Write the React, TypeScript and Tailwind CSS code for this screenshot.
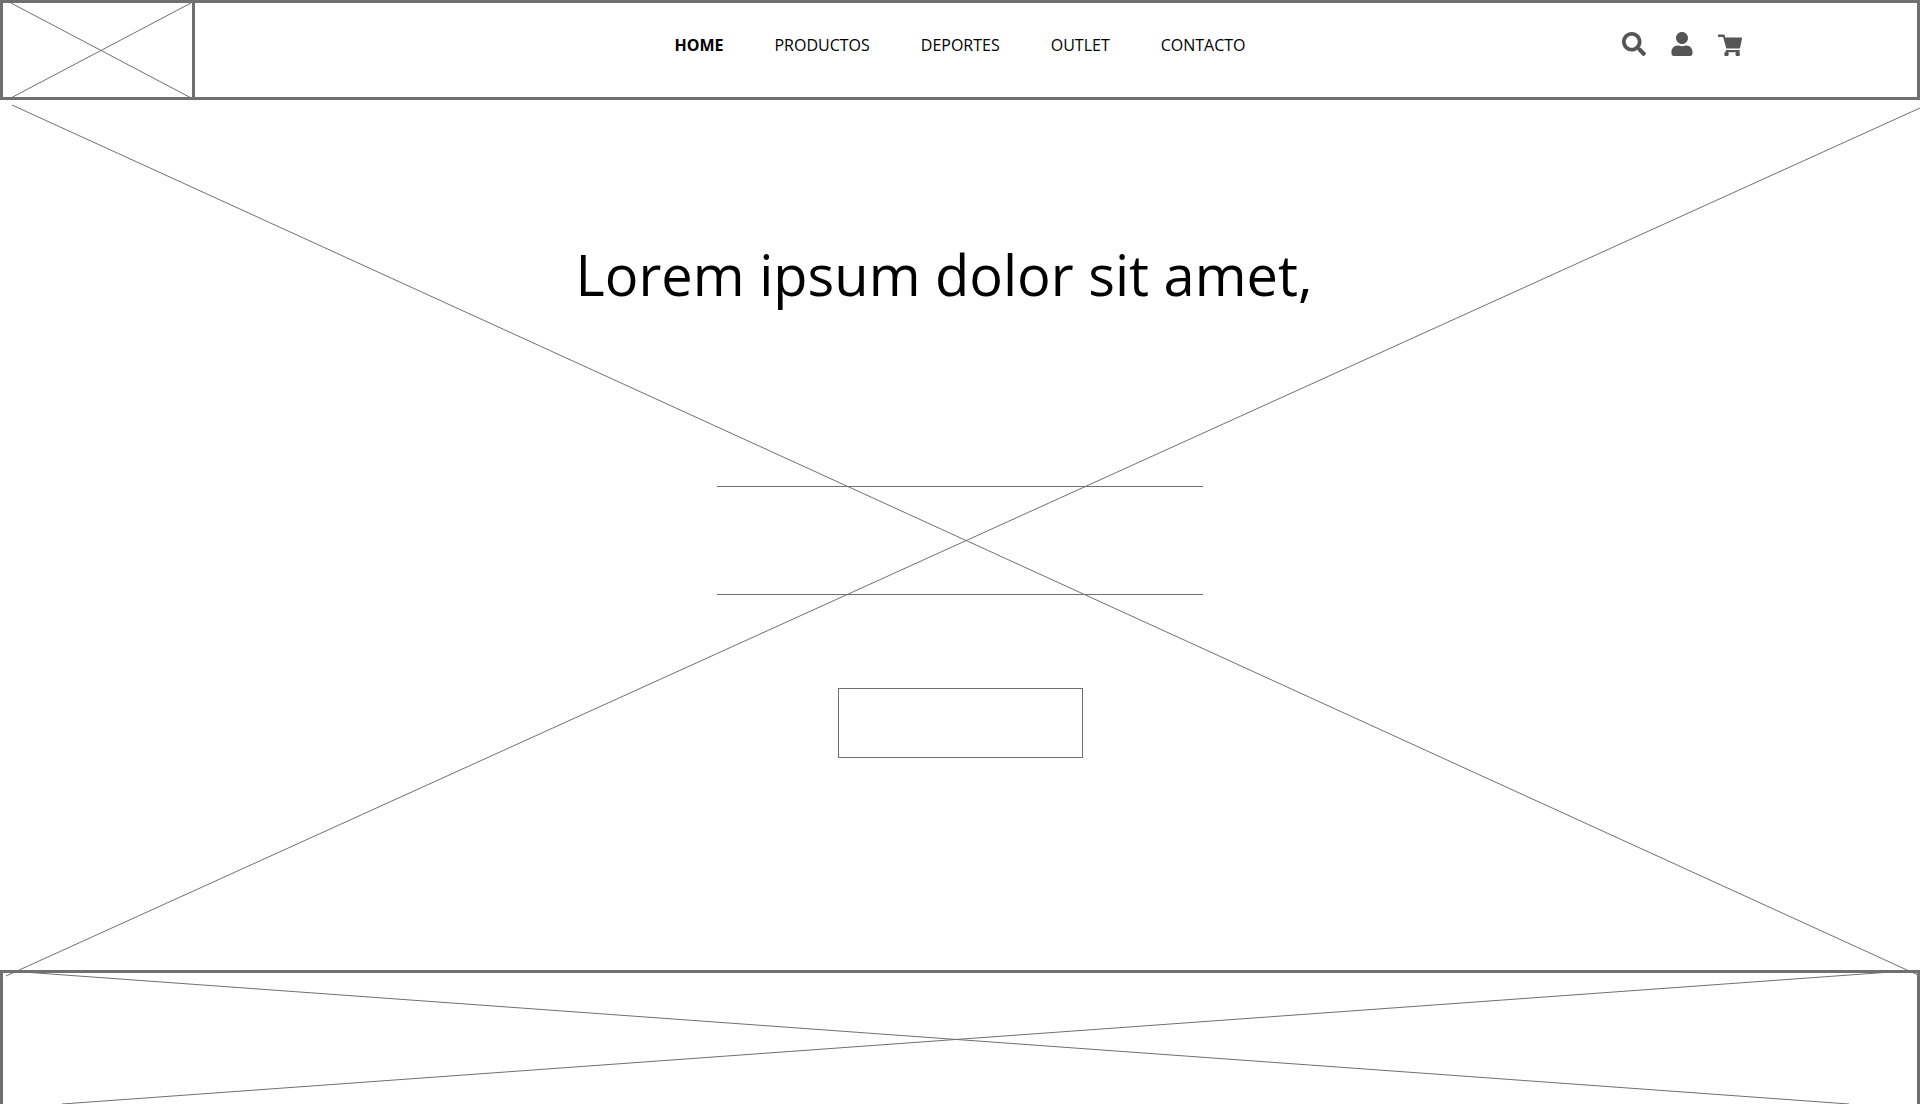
import { FaSearch, FaUser } from "react-icons/fa";

type LineCoords = [x1: number, y1: number, x2: number, y2: number];

const NAV_LINKS = ["HOME", "PRODUCTOS", "DEPORTES", "OUTLET", "CONTACTO"];

function CartIcon({ className }: { className?: string }) {
  return (
    <svg aria-hidden="true" viewBox="0 0 24 24" fill="currentColor" className={className}>
      <path d="M1 2.500h4.800c.5 0 .8.300.9.800L7.200 5.500H23.200c.6 0 .9.500.8 1L22.200 15.600c-.1.600-.5.900-1 .9H8.300L5.100 5H.9a.9.900 0 0 1-.9-.9V3.400a.9.900 0 0 1 1-.9z" />
      <path d="M8 18h13.600v2.200H7.500z" />
      <circle cx="8.500" cy="22" r="2.300" />
      <circle cx="19.700" cy="22" r="2.300" />
    </svg>
  );
}

const ACTIONS = [
  { label: "Buscar", Icon: FaSearch },
  { label: "Cuenta", Icon: FaUser },
  { label: "Carrito", Icon: CartIcon },
];

// Crossed diagonals that mark an image placeholder and stretch with it.
function Cross({ viewBox, lines }: { viewBox: string; lines: LineCoords[] }) {
  return (
    <svg
      aria-hidden="true"
      viewBox={viewBox}
      preserveAspectRatio="none"
      className="pointer-events-none absolute inset-0 h-full w-full overflow-visible stroke-[#707070]"
    >
      {lines.map(([x1, y1, x2, y2]) => (
        <line
          key={`${x1}-${y1}`}
          x1={x1}
          y1={y1}
          x2={x2}
          y2={y2}
          strokeWidth="1"
          vectorEffect="non-scaling-stroke"
        />
      ))}
    </svg>
  );
}

function Header() {
  return (
    <header className="grid grid-cols-[1fr_auto_1fr] border-[3px] border-[#707070]">
      <a
        href="#"
        aria-label="Logo"
        className="relative block h-[94px] w-48 border-r-[3px] border-[#707070]"
      >
        <Cross
          viewBox="3 3 189 94"
          lines={[
            [11, 3, 195, 100],
            [7, 100, 191, 3],
          ]}
        />
      </a>
      <nav className="flex gap-[51px] pt-[30px] text-base">
        {NAV_LINKS.map((name, i) => (
          <a
            key={name}
            href="#"
            className={i === 0 ? "self-start font-bold" : "self-start"}
          >
            {name}
          </a>
        ))}
      </nav>
      <div className="mr-[175px] flex items-start gap-6 justify-self-end pt-[29px] text-[#555555]">
        {ACTIONS.map(({ label, Icon }) => (
          <button key={label} type="button" aria-label={label} className="block">
            <Icon className="size-6" />
          </button>
        ))}
      </div>
    </header>
  );
}

function Hero() {
  return (
    <section className="relative flex flex-col items-center pt-[134px] pb-[212px]">
      <Cross
        viewBox="0 100 1920 870"
        lines={[
          [12, 105, 1918, 975],
          [6, 976, 1920, 108],
        ]}
      />
      <h1 className="relative mr-8 text-[56px] leading-20">Lorem ipsum dolor sit amet,</h1>
      <div className="relative mt-[172px] h-[109px] w-[486px] border-y border-[#707070]" />
      <button
        type="button"
        aria-label="Comprar"
        className="relative mt-[93px] h-[70px] w-[245px] border border-[#707070] bg-white"
      />
    </section>
  );
}

function Banner() {
  return (
    <section className="relative h-[134px] border-x-[3px] border-t-[3px] border-[#707070]">
      <Cross
        viewBox="3 973 1914 131"
        lines={[
          [23, 972, 1849, 1104],
          [62, 1104, 1891, 972],
        ]}
      />
    </section>
  );
}

export default function App() {
  return (
    <div className="overflow-hidden bg-white font-['Open_Sans',sans-serif] text-black">
      <Header />
      <main>
        <Hero />
        <Banner />
      </main>
    </div>
  );
}
